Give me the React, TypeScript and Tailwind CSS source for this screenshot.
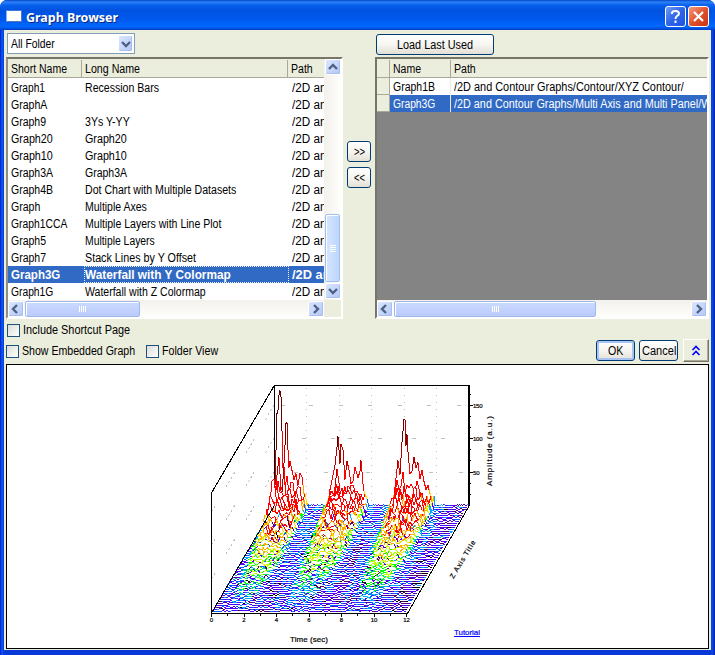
import React, { useLayoutEffect, useRef, useState } from "react";

/* Text condensed to a given width, like the dialog's narrow bitmap font. */
function T({ w, children, className = "" }: { w: number; children: string; className?: string }) {
  const ref = useRef<HTMLSpanElement>(null);
  const [k, setK] = useState(1);
  useLayoutEffect(() => {
    const n = ref.current?.offsetWidth;
    if (n) setK(w / n);
  }, [w]);
  return (
    <span className={`block shrink-0 whitespace-nowrap ${className}`} style={{ width: w }}>
      <span ref={ref} className="inline-block origin-left whitespace-nowrap" style={{ transform: `scaleX(${k})` }}>
        {children}
      </span>
    </span>
  );
}

const rows: [string, number, string, number][] = [
  ["Graph1", 34, "Recession Bars", 74],
  ["GraphA", 36, "", 0],
  ["Graph9", 35, "3Ys Y-YY", 45],
  ["Graph20", 42, "Graph20", 42],
  ["Graph10", 42, "Graph10", 42],
  ["Graph3A", 42, "Graph3A", 42],
  ["Graph4B", 42, "Dot Chart with Multiple Datasets", 151],
  ["Graph", 29, "Multiple Axes", 62],
  ["Graph1CCA", 56, "Multiple Layers with Line Plot", 136],
  ["Graph5", 35, "Multiple Layers", 70],
  ["Graph7", 35, "Stack Lines by Y Offset", 111],
  ["Graph3G", 49, "Waterfall with Y Colormap", 146],
  ["Graph1G", 42, "Waterfall with Z Colormap", 121],
];

const chev: Record<string, string> = {
  up: "M1 6 L5 2 L9 6",
  down: "M1 2 L5 6 L9 2",
  left: "M6 0 L2 4 L6 8",
  right: "M3 0 L7 4 L3 8",
};

function Arrow({ dir, className = "w-[16px] h-[16px]" }: { dir: string; className?: string }) {
  return (
    <div className={`flex shrink-0 items-center justify-center rounded-[2px] border border-white bg-linear-to-br from-[#dbe6fe] to-[#b4c8f6] shadow-[inset_-1px_-1px_0_#a9bdf0] ${className}`}>
      <svg width="10" height="8" viewBox="0 0 10 8" className="overflow-visible">
        <path d={chev[dir]} fill="none" stroke="#4d6185" strokeWidth="2.4" />
      </svg>
    </div>
  );
}

function HBar({ thumb }: { thumb: string }) {
  return (
    <div className="flex h-[17px] items-center bg-linear-to-b from-[#f3f1ec] to-[#fefefb]">
      <Arrow dir="left" />
      <div className={`flex h-[16px] shrink-0 items-center justify-center gap-[1px] rounded-[2px] border border-[#9db8ee] bg-linear-to-b from-[#cbdaff] to-[#bacbfb] shadow-[inset_1px_1px_0_#fff] ${thumb}`}>
        {[0, 1, 2, 3].map((i) => (
          <i key={i} className="h-[6px] w-px bg-white" />
        ))}
      </div>
      <div className="flex-1" />
      <Arrow dir="right" />
    </div>
  );
}

function Btn({ className, children }: { className: string; children: React.ReactNode }) {
  return (
    <div className={`flex shrink-0 items-center justify-center rounded-[3px] border border-[#003c74] bg-linear-to-b from-white via-[#f6f5f0] to-[#e3e0d5] ${className}`}>
      {children}
    </div>
  );
}

function Check({ w, label }: { w: number; label: string }) {
  return (
    <div className="flex items-center gap-[3px]">
      <div className="h-[13px] w-[13px] border border-[#1c5180] bg-linear-to-br from-[#dcdcd7] to-white" />
      <T w={w}>{label}</T>
    </div>
  );
}

/* ---- Waterfall plot ---- */
let seed = 77;
const rnd = () => {
  seed = (seed + 0x6d2b79f5) | 0;
  let t = Math.imul(seed ^ (seed >>> 15), 1 | seed);
  t = (t + Math.imul(t ^ (t >>> 7), 61 | t)) ^ t;
  return ((t ^ (t >>> 14)) >>> 0) / 4294967296;
};

const LEVELS: [number, string][] = [
  [0.35, "#000000"],
  [0.75, "#500070"],
  [1.5, "#5000ff"],
  [2.1, "#0060ff"],
  [2.9, "#00a8ff"],
  [3.4, "#00e8d0"],
  [5.0, "#00ff00"],
  [7.4, "#c0ff00"],
  [8.4, "#ffe000"],
  [13, "#ffa800"],
  [40, "#ff0000"],
  [66, "#b00000"],
  [999, "#600000"],
];
const colorOf = (h: number) => (LEVELS.find((l) => h < l[0]) ?? LEVELS[12])[1];

/* Noise floor: mostly violet at the back, darker towards the front. */
function floorLevel(t: number) {
  const q = rnd() + 0.1 - 0.12 * t;
  if (q < 0.1) return 0.2;
  if (q < 0.34) return 0.5;
  if (q < 0.9) return 1.1;
  if (q < 1.0) return 1.8;
  return 2.5;
}

/* Outline of the rearmost traces: x offset from the back left corner, height. */
const OUTLINES: [number, number][][] = [
  [[0, 8], [1, 20], [2, 55], [3, 92], [4, 95], [5, 110], [6, 115], [7, 109], [8, 75], [9, 38], [10, 42], [11, 60], [12, 82], [13, 83], [14, 56], [15, 38], [16, 44], [18, 35], [20, 26], [22, 32], [24, 20], [26, 32], [28, 29], [30, 12], [33, 4]],
  [[54, 2], [56, 16], [58, 25], [61, 40], [63, 58], [64, 69], [66, 42], [67, 61], [69, 56], [71, 26], [73, 44], [75, 36], [77, 22], [79, 24], [81, 38], [84, 28], [86, 34], [87, 45], [89, 22], [91, 8], [94, 4]],
  [[119, 2], [121, 18], [124, 45], [126, 31], [128, 63], [130, 86], [131, 86], [132, 60], [133, 71], [134, 54], [136, 32], [138, 34], [140, 48], [142, 38], [144, 43], [146, 27], [148, 35], [150, 24], [152, 16], [154, 20], [157, 8], [160, 2]],
];

function outlineAt(dx: number) {
  for (const o of OUTLINES) {
    for (let i = 1; i < o.length; i++) {
      const [x0, h0] = o[i - 1];
      const [x1, h1] = o[i];
      if (dx >= x0 && dx < x1) return h0 + ((h1 - h0) * (dx - x0)) / (x1 - x0);
    }
  }
  return 0;
}

const ROWS = 54;
type Pt = { x: number; h: number; v: number };
const traces: { fill: string; segs: { d: string; c: string }[] }[] = [];
for (let r = 0; r < ROWS; r++) {
  const t = r / (ROWS - 1);
  const x0 = Math.round(274 - 62 * t);
  const y0 = 505.5 + 2 * r;
  const pts: Pt[] = [];
  let base = 1;
  for (let dx = 0; dx <= 195; dx += r === 0 ? 1 : 2) {
    if (rnd() < 0.5) base = floorLevel(t);
    let h = rnd() < 0.18 ? 1 : 0;
    let v = base;
    for (const [a, b] of [[0, 33], [55, 93], [120, 159]]) {
      const lo = a + 14 * t;
      const hi = b + 8 * Math.min(t * 2, 1) - 4 * t;
      const mid = (lo + hi) / 2;
      const half = (hi - lo) / 2 + 2;
      const u = 1 - Math.abs(dx - mid) / half;
      if (u > 0) {
        const env = Math.min(1, 0.25 + u * 2);
        const level = env * (0.5 + rnd() * 0.8) * 28 * Math.exp(-2.75 * t);
        v = rnd() < 0.35 * t ? v : Math.max(v, level);
        h = env * rnd() * (25 * Math.exp(-t * 4.4) + 2.2 - t);
      } else if (u > -0.5) {
        v = Math.max(v, rnd() * 3.1 * (1 - t * 0.3));
      }
    }
    const o = outlineAt(dx);
    if (r === 0 && o) {
      h = o;
      v = Math.max(o, 5);
    } else if (r < 10 && o > 4) {
      h = Math.max(h, o * (0.62 - r * 0.045) * (0.1 + rnd()));
      v = Math.max(v, h + 3);
    }
    pts.push({ x: dx, h, v });
  }
  const P = (p: Pt) => `${(x0 + p.x).toFixed(1)} ${(y0 - p.h).toFixed(1)}`;
  const byColor: Record<string, string> = {};
  for (let i = 1; i < pts.length; i++) {
    const a = pts[i - 1];
    const b = pts[i];
    const c = colorOf(b.v);
    /* Flat runs are stepped pixel cells, so every cell keeps its own colour. */
    const d =
      a.h <= 1 && b.h <= 1
        ? `M${x0 + a.x} ${y0 - b.h - 0.5}h${b.x - a.x}v1h${a.x - b.x}z`
        : "";
    if (d) byColor["f" + c] = (byColor["f" + c] ?? "") + d;
    else byColor["s" + c] = (byColor["s" + c] ?? "") + `M${P(a)}L${P(b)}`;
  }
  traces.push({
    fill: `M${x0} ${y0}` + pts.map((p) => "L" + P(p)).join("") + `L${x0 + 194} ${y0}Z`,
    segs: Object.entries(byColor).map(([c, d]) => ({ c, d })),
  });
}

const dashes = (y: number, xs: number[]) => xs.map((x) => `M${x} ${y}h4`).join("");

function Plot() {
  return (
    <svg width="701" height="283" viewBox="7 365 701 283" className="block" fontFamily="Liberation Sans, Arial, sans-serif">
      <g stroke="#c0c0c0" fill="none" shapeRendering="crispEdges">
        {[306.5, 339.5, 371.5, 404.5, 436.5].map((x) => (
          <path key={x} d={`M${x} 388V505`} strokeDasharray="1 6" />
        ))}
        <path d={dashes(405.5, [281, 309, 339, 368, 398, 427, 457])} />
        <path d={dashes(438.5, [302, 331, 348, 378, 412, 441])} />
        <path d={dashes(472.5, [294, 324, 366, 395, 429, 459])} />
        <path d="M274 405L211 513M274 438L211 546M274 472L211 580" strokeDasharray="2 3 2 3 2 3 2 22" />
      </g>
      <g stroke="#000" fill="none" shapeRendering="crispEdges">
        <path d="M211.5 613V493L274 386M274.5 505V385.5H469" strokeWidth="1.1" />
        <path d="M469 385V506" strokeWidth="2" />
      </g>
      <g fill="none" shapeRendering="crispEdges">
        {traces.map((t, i) => (
          <g key={i}>
            <path d={t.fill} fill="#fff" />
            {t.segs.map((s) =>
              s.c[0] === "f" ? (
                <path key={s.c} d={s.d} fill={s.c.slice(1)} />
              ) : (
                <path key={s.c} d={s.d} stroke={s.c.slice(1)} strokeWidth="1" />
              ),
            )}
          </g>
        ))}
      </g>
      <g stroke="#000" fill="none" shapeRendering="crispEdges">
        <path d="M211 613.5H407.5L469 506M211.5 613L274 506" />
        {[0, 1, 2, 3, 4, 5, 6, 7, 8, 9, 10, 11, 12].map((i) => (
          <path key={i} d={`M${211.5 + i * 16.25} 614v${i % 2 ? 1.5 : 3}`} />
        ))}
        <path d="M469 405.5h4M469 438.5h4M469 472.5h4M469 394.5h2M469 416.5h2M469 427.5h2M469 449.5h2M469 460.5h2M469 483.5h2M469 494.5h2" />
      </g>
      <g fontSize="6" fill="#000" stroke="#000" strokeWidth=".2">
        {[0, 2, 4, 6, 8, 10, 12].map((n, i) => (
          <text key={n} x={211.5 + i * 32.5} y="622" textAnchor="middle">{n}</text>
        ))}
        <text x="473" y="407.5" textLength="9.5">150</text>
        <text x="473" y="440.5" textLength="9.5">100</text>
        <text x="473" y="474.5" textLength="6.5">50</text>
        <text x="290" y="642" fontSize="8" textLength="38">Time (sec)</text>
        <text transform="translate(491.5 486) rotate(-90)" fontSize="8" textLength="70">Amplitude (a.u.)</text>
        <text transform="translate(453.5 579) rotate(-59)" fontSize="7" textLength="43">Z Axis Title</text>
        <text x="454" y="634.5" fontSize="8" textLength="26" fill="#00f" stroke="#00f">Tutorial</text>
      </g>
      <path d="M454 636.5H480" stroke="#00f" shapeRendering="crispEdges" />
    </svg>
  );
}

export default function App() {
  return (
    <div className="h-[655px] w-[715px] overflow-hidden bg-white font-['Liberation_Sans',Arial,sans-serif] text-[12px] leading-[16px] text-black">
      <div className="flex h-full flex-col overflow-hidden rounded-t-[7px] bg-[#0842d8]">
        <div className="flex h-[30px] shrink-0 items-center bg-[linear-gradient(180deg,#0846c8_0%,#2b82f8_7%,#0860ee_17%,#0052df_35%,#0059ee_65%,#0068ff_88%,#0050dc_96%,#0038c0_100%)] pt-[3px] pr-[6px] pl-[6px]">
          <div className="-mt-px h-[12px] w-[16px] border border-t-[#3a7be0] border-r-[#4f79b8] border-b-[#4f79b8] border-l-[#7fb2ff] bg-white" />
          <T w={92} className="ml-[4px] font-['Noto_Sans','Open_Sans',sans-serif] text-[13px] font-bold text-white [text-shadow:1px_1px_0_#0b2a80]">Graph Browser</T>
          <div className="ml-auto flex gap-[2px]">
            <div className="flex h-[21px] w-[21px] items-center justify-center rounded-[3px] border border-white bg-linear-to-br from-[#6f9cf8] via-[#2f63e8] to-[#1b55e4]">
              <svg width="13" height="15" viewBox="0 0 13 15"><path d="M3 5V4Q3 2 6.5 2T10 4.5Q10 6 8 7Q6.5 8 6.5 10M6.5 11.5V14" fill="none" stroke="#fff" strokeWidth="2" /></svg>
            </div>
            <div className="flex h-[21px] w-[21px] items-center justify-center rounded-[3px] border border-white bg-linear-to-br from-[#f09a80] via-[#e2512d] to-[#c8330f]">
              <svg width="13" height="13" viewBox="0 0 13 13"><path d="M2 2L11 11M11 2L2 11" stroke="#fff" strokeWidth="2.2" /></svg>
            </div>
          </div>
        </div>

        <div className="flex min-h-0 flex-1 bg-[linear-gradient(90deg,#0019cf,#0a5cf0_2px,#0838d8_4px,#0838d8_711px,#0a4ff0_712px,#001fa8_715px)] px-[4px] pb-[5px]">
          <div className="flex flex-1 flex-col bg-[#eceedd]">
            <div className="flex h-[27px] shrink-0 pt-[3px] pl-[3px]">
              <div className="flex h-[21px] w-[128px] items-center justify-between border border-[#7f9db9] bg-white pr-[1px] pl-[3px]">
                <T w={44}>All Folder</T>
                <Arrow dir="down" className="h-[17px] w-[15px]" />
              </div>
              <Btn className="mt-px ml-[241px] h-[21px] w-[118px]">
                <T w={76}>Load Last Used</T>
              </Btn>
            </div>

            <div className="flex h-[262px] shrink-0 pr-[2px] pl-[2px]">
              <div className="flex w-[337px] flex-col border-2 border-t-[#77756a] border-r-white border-b-white border-l-[#928f84]">
                <div className="flex min-h-0 flex-1">
                  <div className="w-[316px] overflow-hidden bg-white">
                    <div className="flex h-[19px] items-center border-b border-b-[#aca899] bg-[#eceedd] pt-px">
                      <T w={56} className="ml-[3px]">Short Name</T>
                      <i className="ml-[14px] h-full w-px bg-[#aca899]" />
                      <T w={55} className="ml-[3px]">Long Name</T>
                      <i className="ml-[147px] h-full w-px bg-[#aca899]" />
                      <T w={22} className="ml-[3px]">Path</T>
                    </div>
                    <div className="pt-[1px]">
                      {rows.map(([s, sw, l, lw], i) => {
                        const sel = i === 11;
                        return (
                          <div key={i} className={`flex h-[17px] items-center pl-[3px] ${sel ? "bg-[#316ac5] font-bold text-white" : ""}`}>
                            <div className="w-[73px] shrink-0"><T w={sw}>{s}</T></div>
                            <div className={`flex h-full w-[205px] shrink-0 items-center border border-dotted ${sel ? "border-[#e8efff]" : "border-transparent"}`}>
                              {l && <T w={lw}>{l}</T>}
                            </div>
                            <T w={sel ? 46 : 41} className="ml-[3px]">/2D and</T>
                          </div>
                        );
                      })}
                    </div>
                  </div>
                  <div className="flex flex-1 flex-col items-center bg-linear-to-r from-[#f3f1ec] to-[#fefefb]">
                    <Arrow dir="up" className="h-[16px] w-[16px]" />
                    <div className="mt-[139px] flex h-[68px] w-[15px] flex-col items-center justify-center gap-px rounded-[2px] border border-[#9dc0f0] bg-linear-to-r from-[#d5e6ff] to-[#bdd6ff] shadow-[inset_1px_1px_0_#fff]">
                      {[0, 1, 2, 3].map((i) => (
                        <i key={i} className="h-px w-[6px] bg-white" />
                      ))}
                    </div>
                    <Arrow dir="down" className="mt-px h-[16px] w-[16px]" />
                  </div>
                </div>
                <div className="flex bg-[#eceedd]">
                  <div className="w-[316px]"><HBar thumb="ml-px w-[115px]" /></div>
                </div>
              </div>

              <div className="flex w-[32px] flex-col items-center gap-[5px] pt-[84px]">
                <Btn className="h-[21px] w-[24px]"><T w={11}>{">>"}</T></Btn>
                <Btn className="h-[21px] w-[24px]"><T w={11}>{"<<"}</T></Btn>
              </div>

              <div className="flex w-[334px] flex-col overflow-hidden border-2 border-t-[#77756a] border-r-white border-b-white border-l-[#77756a]">
                <div className="min-h-0 flex-1 overflow-hidden bg-[#848484]">
                  <div className="flex h-[19px] items-center border-b border-b-[#aca899] bg-[#eceedd] pt-px">
                    <i className="ml-[12px] h-full w-px bg-[#aca899]" />
                    <T w={28} className="ml-[3px]">Name</T>
                    <i className="ml-[29px] h-full w-px bg-[#aca899]" />
                    <T w={22} className="ml-[3px]">Path</T>
                  </div>
                  <div className="flex h-[17px] bg-white leading-[18px]">
                    <i className="w-[13px] shrink-0 border-r border-b border-[#aca899] bg-[#eceedd]" />
                    <div className="w-[60px] shrink-0 pl-[3px]"><T w={42}>Graph1B</T></div>
                    <div className="border-l border-[#eceedd] pl-[3px]"><T w={230}>/2D and Contour Graphs/Contour/XYZ Contour/</T></div>
                  </div>
                  <div className="flex h-[17px] bg-[#316ac5] leading-[18px] text-white">
                    <i className="w-[13px] shrink-0 border-r border-b border-[#aca899] bg-[#eceedd]" />
                    <div className="w-[60px] shrink-0 pl-[3px]"><T w={42}>Graph3G</T></div>
                    <div className="border-l border-[#eceedd] pl-[3px]"><T w={257}>/2D and Contour Graphs/Multi Axis and Multi Panel/W</T></div>
                  </div>
                </div>
                <HBar thumb="ml-px w-[202px]" />
              </div>
            </div>

            <div className="flex h-[45px] shrink-0">
              <div className="flex flex-col pt-[3px] pl-[2px]">
                <div className="pl-px"><Check w={107} label="Include Shortcut Page" /></div>
                <div className="mt-[5px] flex gap-[11px]">
                  <Check w={113} label="Show Embedded Graph" />
                  <Check w={56} label="Folder View" />
                </div>
              </div>
              <div className="ml-auto flex items-center pt-[17px] pr-[2px]">
                <Btn className="h-[21px] w-[39px] pt-px shadow-[inset_0_0_0_2px_#a9c4f4]"><T w={15}>OK</T></Btn>
                <Btn className="ml-[4px] h-[21px] w-[39px] pt-px"><T w={34}>Cancel</T></Btn>
                <div className="ml-[5px] flex h-[23px] w-[26px] items-center justify-center border border-t-white border-r-[#77756a] border-b-[#77756a] border-l-white shadow-[inset_-1px_-1px_0_#aca899]">
                  <svg width="10" height="11" viewBox="0 0 10 11"><path d="M1.5 5L5 1.5L8.5 5M1.5 10L5 6.5L8.5 10" fill="none" stroke="#00f" strokeWidth="1.6" /></svg>
                </div>
              </div>
            </div>

            <div className="mx-[2px] h-[285px] shrink-0 overflow-hidden border border-black bg-white">
              <Plot />
            </div>
          </div>
        </div>
      </div>
    </div>
  );
}
